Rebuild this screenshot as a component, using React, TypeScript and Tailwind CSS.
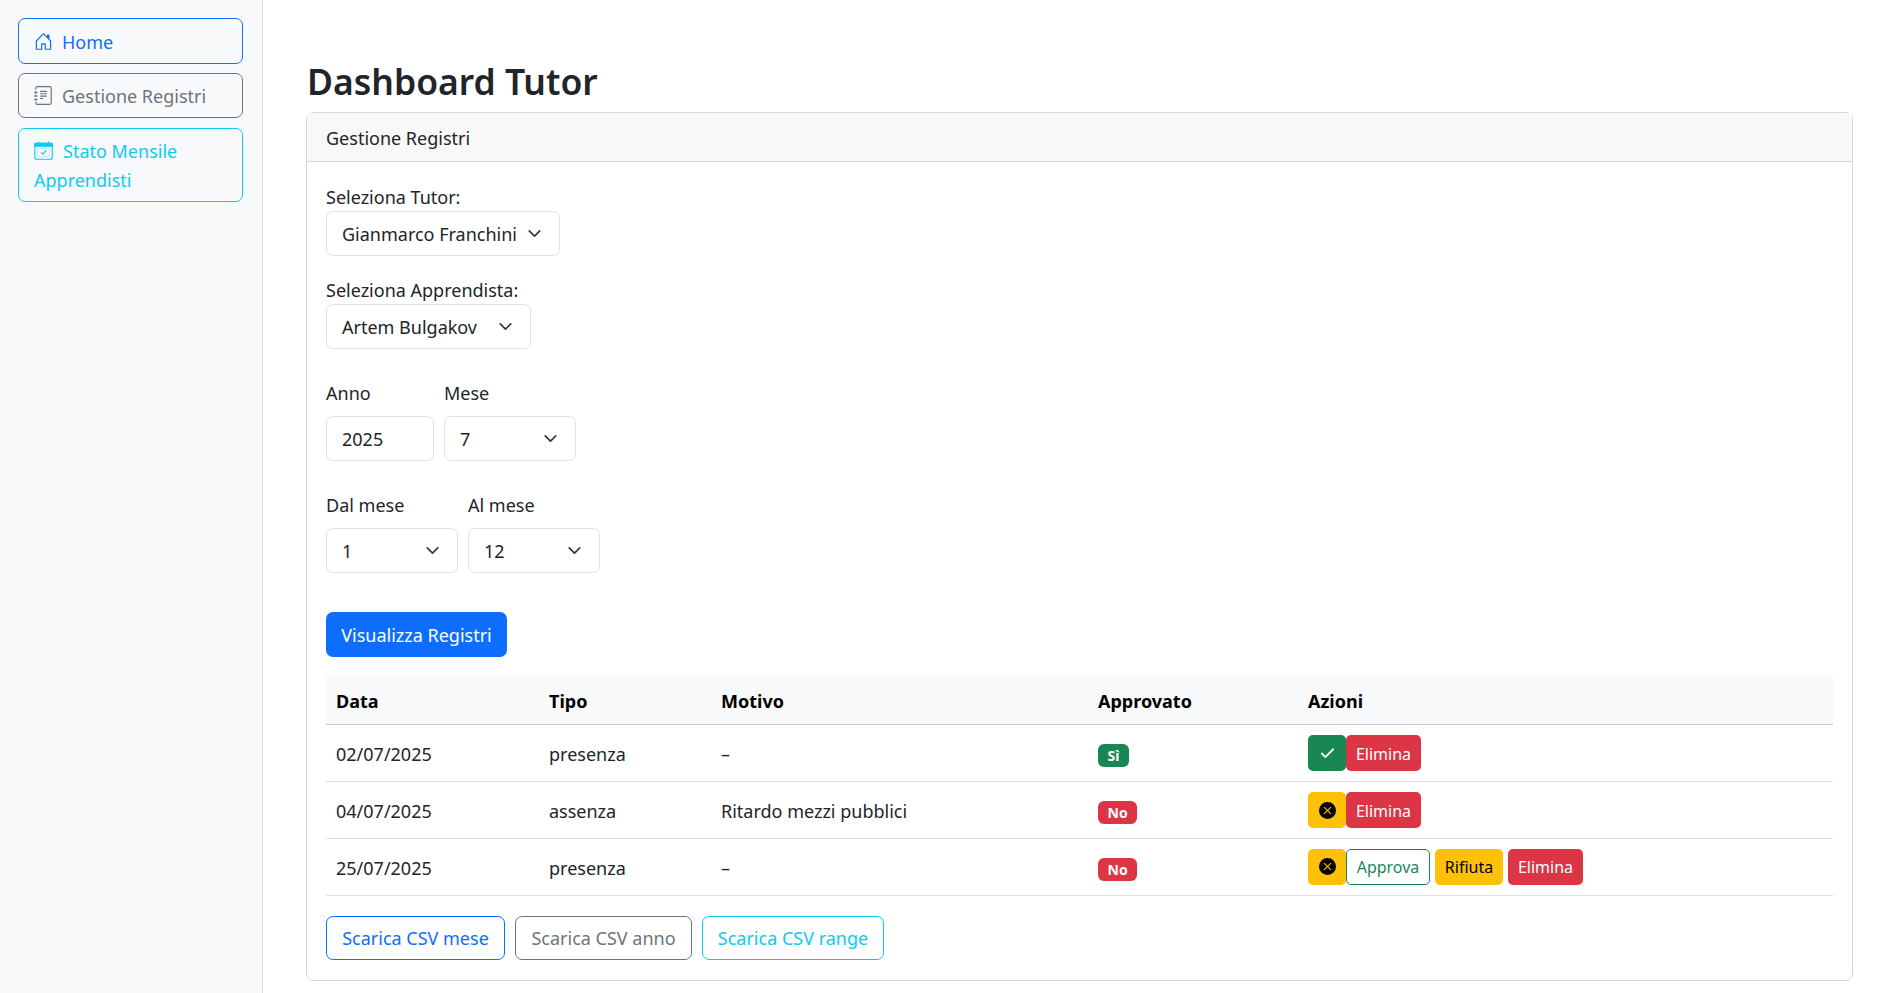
import { BsHouseDoor, BsJournalText, BsXCircleFill } from "react-icons/bs";
import { ChevronDown, Check } from "lucide-react";

const rows = [
  { data: "02/07/2025", tipo: "presenza", motivo: "–", ok: true, pending: false },
  { data: "04/07/2025", tipo: "assenza", motivo: "Ritardo mezzi pubblici", ok: false, pending: false },
  { data: "25/07/2025", tipo: "presenza", motivo: "–", ok: false, pending: true },
];

function Select({ value, className }: { value: string; className: string }) {
  return (
    <div className={`flex h-[45px] items-center justify-between rounded-[7px] border border-[#dee2e6] bg-white pl-[15px] pr-[14px] text-[#212529] ${className}`}>
      <span className="pt-[2px]">{value}</span>
      <ChevronDown size={21} strokeWidth={2} className="text-[#343a40]" />
    </div>
  );
}

// Calendar with the solid header band used on the third sidebar link
function CalendarIcon() {
  return (
    <svg width="19" height="19" viewBox="0 0 19 19" fill="none" stroke="currentColor" className="mr-[10px] inline-block align-[-2px]">
      <rect x="0.75" y="2.25" width="17.5" height="16" rx="2" strokeWidth="1.1" />
      <path d="M0.75 2.25h17.5v3H0.75z" fill="currentColor" strokeWidth="1" />
      <path d="M4.5 0.5v2M14.5 0.5v2" strokeWidth="1.3" />
      <rect x="3.5" y="7.5" width="12" height="8" rx="0.5" strokeWidth="0.5" opacity="0.5" />
      <path d="M7 11.3l1.8 1.8 3.4-3.6" strokeWidth="1.1" />
    </svg>
  );
}

export default function App() {
  return (
    <div className="flex min-h-[993px] bg-white text-[18px] leading-[29px] text-[#212529] [font-family:'Noto_Sans',sans-serif]">
      {/* Sidebar */}
      <aside className="flex w-[263px] shrink-0 flex-col border-r border-[#dee2e6] bg-[#f8f9fa] py-[18px] pl-[18px] pr-[19px]">
        <a className="mb-[9px] flex h-[46px] items-center gap-[9px] rounded-[7px] border border-[#0d6efd] px-[15px] text-[#0d6efd]">
          <BsHouseDoor size={19} />
          <span className="pt-[2px]">Home</span>
        </a>
        <a className="mb-[10px] flex h-[45px] items-center gap-[9px] rounded-[7px] border border-[#6c757d] px-[15px] text-[#6c757d]">
          <BsJournalText size={19} />
          <span className="pt-[2px]">Gestione Registri</span>
        </a>
        <a className="block h-[74px] rounded-[7px] border border-[#0dcaf0] px-[15px] pt-[8px] text-[#0dcaf0]">
          <CalendarIcon />
          Stato Mensile Apprendisti
        </a>
      </aside>

      {/* Main */}
      <main className="min-w-0 flex-1 pl-[43px] pr-[43px] pt-[52px]">
        <h1 className="h-[60px] pl-[1px] text-[35.5px] leading-[58px] font-semibold text-[#212529]">Dashboard Tutor</h1>
        <section className="rounded-[7px] border border-[#d5d7d9]">
          <div className="flex h-[49px] items-center border-b border-[#d5d7d9] bg-[#f8f8f8] px-[19px] pt-[2px]">Gestione Registri</div>
          <div className="px-[19px] pt-[20px] pb-[20px]">
            <label className="block h-[29px] pt-[1px]">Seleziona Tutor:</label>
            <Select value="Gianmarco Franchini" className="w-[234px]" />
            <label className="mt-[19px] block h-[29px] pt-[1px]">Seleziona Apprendista:</label>
            <Select value="Artem Bulgakov" className="w-[205px]" />

            <div className="mt-[29px] flex gap-[10px]">
              <div>
                <label className="mb-[9px] block h-[29px] pt-[1px]">Anno</label>
                <div className="flex h-[45px] w-[108px] items-center rounded-[7px] border border-[#dee2e6] px-[15px] pt-[2px]">2025</div>
              </div>
              <div>
                <label className="mb-[9px] block h-[29px] pt-[1px]">Mese</label>
                <Select value="7" className="w-[132px]" />
              </div>
            </div>

            <div className="mt-[29px] flex gap-[10px]">
              <div>
                <label className="mb-[9px] block h-[29px] pt-[1px]">Dal mese</label>
                <Select value="1" className="w-[132px]" />
              </div>
              <div>
                <label className="mb-[9px] block h-[29px] pt-[1px]">Al mese</label>
                <Select value="12" className="w-[132px]" />
              </div>
            </div>

            <button className="mt-[39px] flex h-[45px] w-[181px] items-center justify-center rounded-[7px] bg-[#0d6efd] pt-[2px] text-white">
              Visualizza Registri
            </button>

            <table className="mt-[19px] w-full border-collapse text-left">
              <thead>
                <tr className="h-[48px] border-b border-[#c8c9ca] bg-[#f8f9fa] text-black">
                  <th className="w-[213px] px-[10px] pt-[3px] font-bold">Data</th>
                  <th className="w-[172px] px-[10px] pt-[3px] font-bold">Tipo</th>
                  <th className="w-[377px] px-[10px] pt-[3px] font-bold">Motivo</th>
                  <th className="w-[210px] px-[10px] pt-[3px] font-bold">Approvato</th>
                  <th className="px-[10px] pt-[3px] font-bold">Azioni</th>
                </tr>
              </thead>
              <tbody>
                {rows.map((r) => (
                  <tr key={r.data} className="h-[57px] border-b border-[#dee2e6]">
                    <td className="px-[10px] pt-[3px]">{r.data}</td>
                    <td className="px-[10px] pt-[3px]">{r.tipo}</td>
                    <td className="px-[10px] pt-[3px]">{r.motivo}</td>
                    <td className="px-[10px] pt-[3px]">
                      <span className={`inline-block h-[23px] rounded-[6px] px-[9.5px] text-[14px] leading-[24px] font-bold text-white ${r.ok ? "bg-[#198754]" : "bg-[#dc3545]"}`}>
                        {r.ok ? "Sì" : "No"}
                      </span>
                    </td>
                    <td className={`px-[10px] ${r.pending ? "" : "pt-[1px]"}`}>
                      <div className="flex items-center text-[16px]">
                        <span className={`flex h-[36px] w-[38px] items-center justify-center rounded-[5px] ${r.ok ? "bg-[#198754] text-white" : "bg-[#ffc107] text-black"}`}>
                          {r.ok ? <Check size={17} strokeWidth={2.6} /> : <BsXCircleFill size={17} />}
                        </span>
                        {r.pending && (
                          <>
                            <button className="flex h-[36px] w-[84px] items-center justify-center rounded-[5px] border border-[#198754] pt-[2px] text-[#198754]">Approva</button>
                            <button className="ml-[5px] flex h-[36px] w-[68px] items-center justify-center rounded-[5px] bg-[#ffc107] pt-[2px] text-black">Rifiuta</button>
                            <button className="ml-[5px] flex h-[36px] w-[75px] items-center justify-center rounded-[5px] bg-[#dc3545] pt-[2px] text-white">Elimina</button>
                          </>
                        )}
                        {!r.pending && (
                          <button className="flex h-[36px] w-[75px] items-center justify-center rounded-[5px] bg-[#dc3545] pt-[2px] text-white">Elimina</button>
                        )}
                      </div>
                    </td>
                  </tr>
                ))}
              </tbody>
            </table>

            <div className="mt-[20px] flex gap-[10px]">
              <button className="flex h-[44px] w-[179px] items-center justify-center rounded-[7px] border border-[#0d6efd] pt-[2px] text-[#0d6efd]">Scarica CSV mese</button>
              <button className="flex h-[44px] w-[177px] items-center justify-center rounded-[7px] border border-[#6c757d] pt-[2px] text-[#6c757d]">Scarica CSV anno</button>
              <button className="flex h-[44px] w-[182px] items-center justify-center rounded-[7px] border border-[#0dcaf0] pt-[2px] text-[#0dcaf0]">Scarica CSV range</button>
            </div>
          </div>
        </section>
      </main>
    </div>
  );
}
